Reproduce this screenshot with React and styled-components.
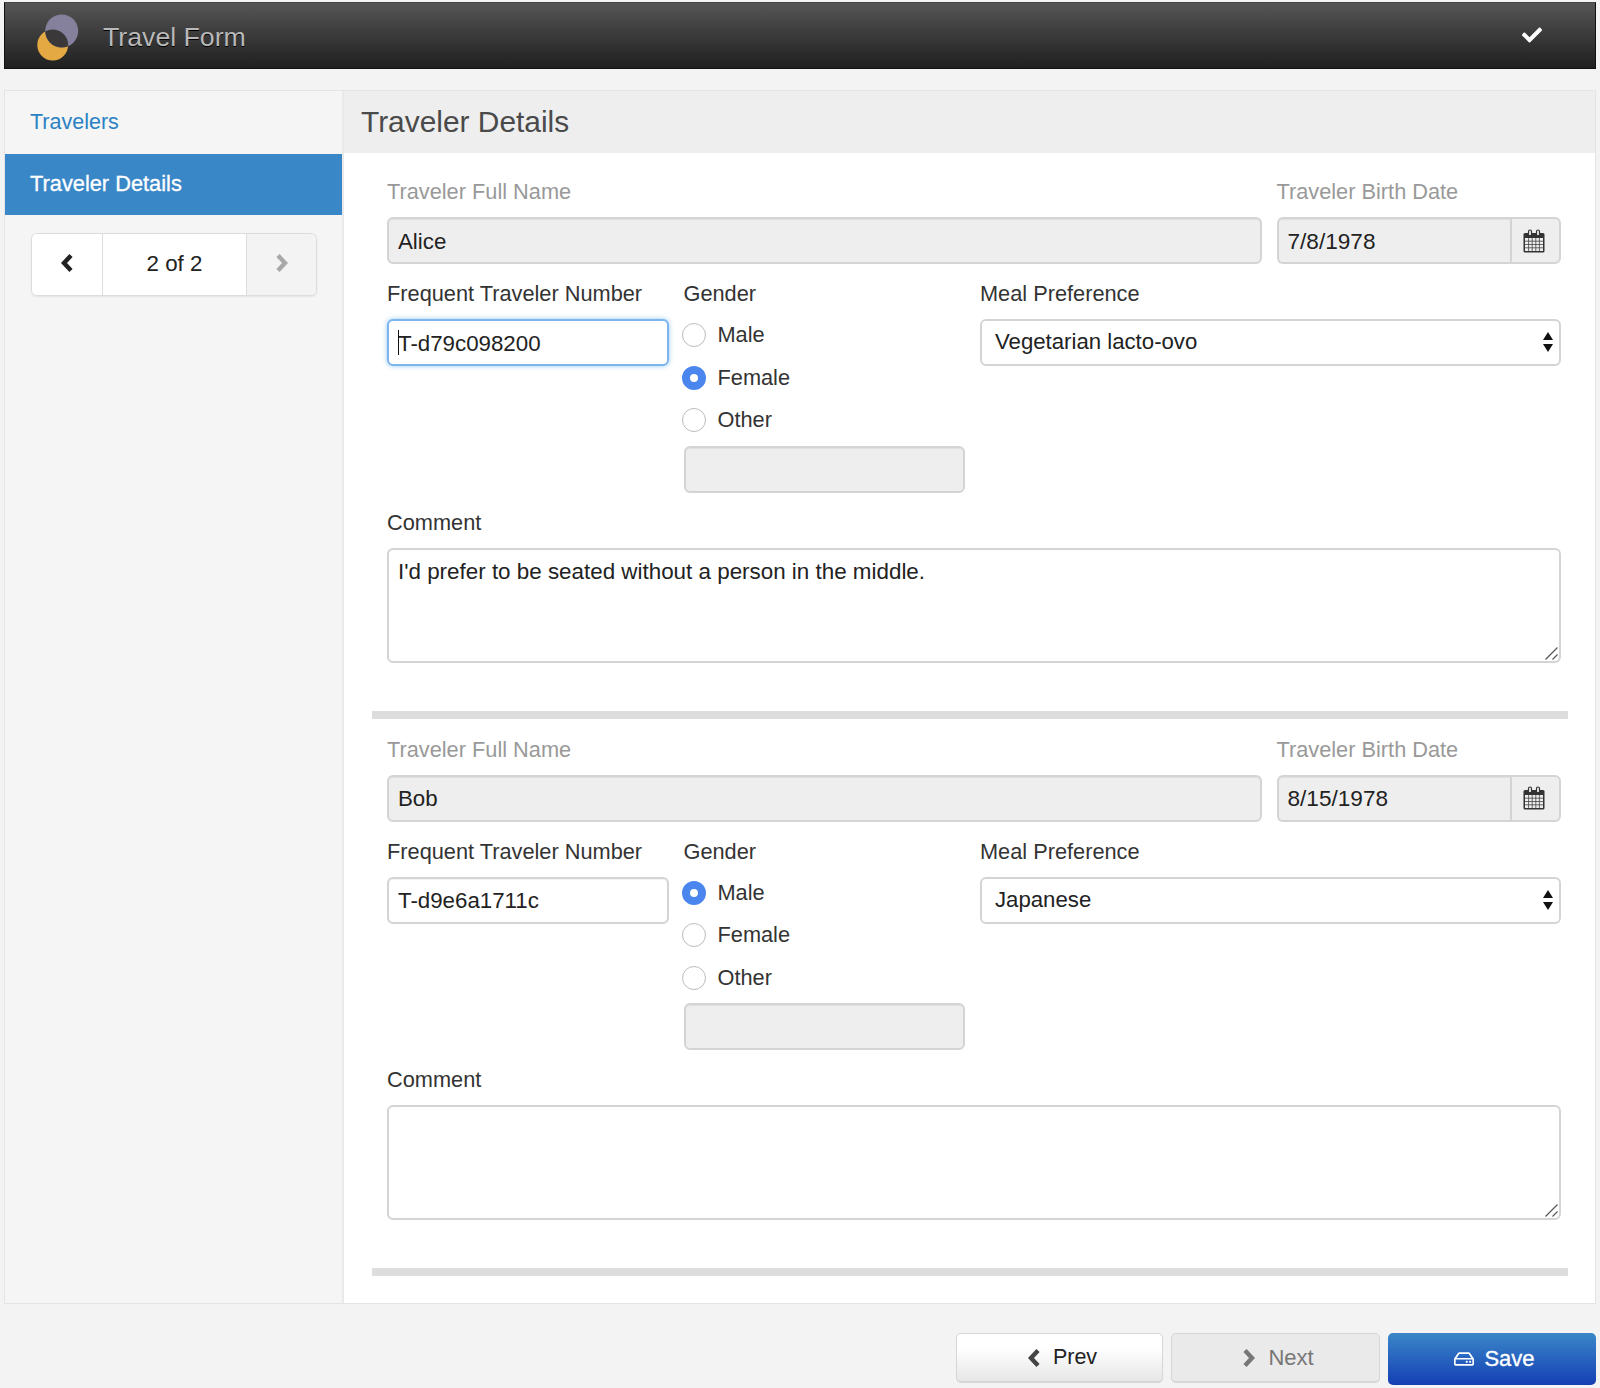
import React from 'react'
import styled, {createGlobalStyle} from "styled-components";
import {FaCheck, FaRegHdd} from "react-icons/fa";

const GlobalStyle = createGlobalStyle`
  body {
    margin: 0;
    background-color: #f3f3f3;
    font-family: "Liberation Sans", Arial, sans-serif;
    color: #222;
  }
`;

const travelers = [
  {name: "Alice", birth: "7/8/1978", number: "T-d79c098200", gender: "Female", meal: "Vegetarian lacto-ovo", comment: "I'd prefer to be seated without a person in the middle.", focused: true},
  {name: "Bob", birth: "8/15/1978", number: "T-d9e6a1711c", gender: "Male", meal: "Japanese", comment: "", focused: false},
];

function Logo() {
  return (
    <LogoSvg viewBox="0 0 42 47" width="42" height="47">
      <defs>
        <clipPath id="logo-lens">
          <circle cx="24.7" cy="17" r="16.5" />
        </clipPath>
      </defs>
      <circle cx="15.7" cy="31" r="15.4" fill="#e4a942" />
      <circle cx="24.7" cy="17" r="16.5" fill="#85819c" />
      <circle cx="15.7" cy="31" r="15.4" fill="#3a3838" clipPath="url(#logo-lens)" />
    </LogoSvg>
  )
}

function CalendarIcon() {
  return (
    <svg viewBox="0 0 22 24" width="22" height="24">
      <rect x="0.5" y="4" width="21" height="19.5" rx="1.5" fill="#333" />
      <rect x="2" y="9" width="18" height="13" fill="#eee" />
      <path d="M2 12.2H20M2 15.5H20M2 18.8H20M5.6 9V22M9.2 9V22M12.8 9V22M16.4 9V22" stroke="#444" strokeWidth="0.8" />
      <path d="M5.5 6V2.5a1.5 1.5 0 0 1 3 0V6M13.5 6V2.5a1.5 1.5 0 0 1 3 0V6" fill="#eee" stroke="#333" strokeWidth="1.2" />
    </svg>
  )
}

// heavy glyphicon style chevron
function Chevron({left, color}) {
  return (
    <svg viewBox="0 0 14 20" width="14" height="20">
      <polyline
        points={left ? "11,2.5 4,10 11,17.5" : "3,2.5 10,10 3,17.5"}
        fill="none"
        stroke={color}
        strokeWidth="4.4"
      />
    </svg>
  )
}

function TravelerForm({traveler}) {
  return (
    <TravelerSection>
      <FieldGrid>
        <Field $span={3} $inset>
          <FieldLabel $muted>Traveler Full Name</FieldLabel>
          <TextInput disabled readOnly value={traveler.name} />
        </Field>
        <Field>
          <FieldLabel $muted>Traveler Birth Date</FieldLabel>
          <DateGroup>
            <DateInput disabled readOnly value={traveler.birth} />
            <DateAddon><CalendarIcon /></DateAddon>
          </DateGroup>
        </Field>
        <Field $inset>
          <FieldLabel>Frequent Traveler Number</FieldLabel>
          <InputWrap>
            <TextInput readOnly value={traveler.number} $focused={traveler.focused} />
            {traveler.focused && <Caret />}
          </InputWrap>
        </Field>
        <Field $inset>
          <FieldLabel>Gender</FieldLabel>
          <RadioList>
            {["Male", "Female", "Other"].map((g) => (
              <RadioRow key={g}>
                <Radio type="radio" readOnly checked={traveler.gender === g} name={traveler.name} />
                {g}
              </RadioRow>
            ))}
          </RadioList>
          <TextInput disabled readOnly value="" />
        </Field>
        <Field $span={2}>
          <FieldLabel>Meal Preference</FieldLabel>
          <InputWrap>
            <MealSelect value={traveler.meal} readOnly>
              <option>{traveler.meal}</option>
            </MealSelect>
            <SelectArrows viewBox="0 0 10 20" width="10" height="20">
              <path d="M5 0 L10 8 H0 Z M0 12 H10 L5 20 Z" fill="#111" />
            </SelectArrows>
          </InputWrap>
        </Field>
        <Field $span={4}>
          <FieldLabel>Comment</FieldLabel>
          <InputWrap>
            <CommentBox readOnly value={traveler.comment} />
            <ResizeGrip viewBox="0 0 13 13" width="13" height="13">
              <path d="M0.5 12.5 L12.5 0.5 M7.5 12.5 L12.5 7.5" stroke="#555" strokeWidth="1.2" fill="none" />
            </ResizeGrip>
          </InputWrap>
        </Field>
      </FieldGrid>
      <Divider />
    </TravelerSection>
  )
}

export default function App() {
  return (
    <>
      <GlobalStyle />
      <Page>
        <TopBar>
          <Brand>
            <Logo />
            <BrandTitle>Travel Form</BrandTitle>
          </Brand>
          <TopCheck><FaCheck size={20} /></TopCheck>
        </TopBar>
        <Panel>
          <Sidebar>
            <SideLink>Travelers</SideLink>
            <SideLink $active>Traveler Details</SideLink>
            <Pager>
              <PagerArrow><Chevron left color="#222" /></PagerArrow>
              <PagerCount>2 of 2</PagerCount>
              <PagerArrow $disabled><Chevron color="#a8a8a8" /></PagerArrow>
            </Pager>
          </Sidebar>
          <Main>
            <MainHeader>Traveler Details</MainHeader>
            <MainBody>
              {travelers.map((t) => <TravelerForm key={t.name} traveler={t} />)}
            </MainBody>
          </Main>
        </Panel>
        <Footer>
          <NavButton><Chevron left color="#444" />Prev</NavButton>
          <NavButton $disabled><Chevron color="#777" />Next</NavButton>
          <SaveButton><FaRegHdd size={20} />Save</SaveButton>
        </Footer>
      </Page>
    </>
  )
}

const Page = styled.div`
  width: 1592px;
  margin: 0 auto;
  padding: 2px 0 4px;
`;

const TopBar = styled.header`
  height: 67px;
  box-sizing: border-box;
  display: flex;
  align-items: center;
  justify-content: space-between;
  background: linear-gradient(to bottom, #555 0%, #1f1f1f 100%);
  border: 1px solid #111;
  border-top-color: #444;
`;

const Brand = styled.div`
  display: flex;
  align-items: center;
  gap: 24px;
  padding-left: 32px;
`;

const LogoSvg = styled.svg`
  display: block;
  margin-top: 3px;
`;

const BrandTitle = styled.span`
  padding-top: 3px;
  font-size: 26.7px;
  color: #b9b9b9;
  text-shadow: 0 1px 0 #000;
`;

const TopCheck = styled.span`
  color: #fff;
  display: flex;
  margin-right: 53px;
  margin-bottom: 1px;
`;

const Panel = styled.div`
  margin-top: 21px;
  display: flex;
  border: 1px solid #e4e4e4;
  background-color: #f5f5f5;
`;

const Sidebar = styled.nav`
  width: 337px;
  flex: none;
  border-right: 2px solid #e9e9e9;
`;

const SideLink = styled.div`
  height: ${(p) => (p.$active ? "61px" : "63px")};
  display: flex;
  align-items: center;
  padding-left: 25px;
  padding-bottom: ${(p) => (p.$active ? "2px" : "0")};
  box-sizing: border-box;
  font-size: ${(p) => (p.$active ? "21.8px" : "21.5px")};
  color: ${(p) => (p.$active ? "#fff" : "#2a82c4")};
  background-color: ${(p) => (p.$active ? "#3a87c8" : "transparent")};
  -webkit-text-stroke: ${(p) => (p.$active ? "0.3px #fff" : "0")};
`;

const Pager = styled.div`
  margin: 18px 25px 0 26px;
  height: 63px;
  box-sizing: border-box;
  display: grid;
  grid-template-columns: 70px 1fr 69px;
  border: 1px solid #ddd;
  border-radius: 6px;
  overflow: hidden;
  box-shadow: 0 1px 2px rgba(0, 0, 0, 0.08);
`;

const PagerArrow = styled.div`
  display: flex;
  align-items: center;
  justify-content: center;
  padding-bottom: 4px;
  background-color: ${(p) => (p.$disabled ? "#f3f3f3" : "#fff")};
`;

const PagerCount = styled.div`
  display: flex;
  align-items: center;
  justify-content: center;
  padding-bottom: 2px;
  background-color: #fff;
  font-size: 22.3px;
  color: #222;
  border-left: 1px solid #ddd;
  border-right: 1px solid #ddd;
`;

const Main = styled.main`
  flex: 1;
  min-width: 0;
  background-color: #fff;
`;

const MainHeader = styled.h2`
  margin: 0;
  height: 62px;
  display: flex;
  align-items: center;
  padding-left: 17px;
  background-color: #eee;
  font-size: 29.9px;
  font-weight: normal;
  color: #4a4a4a;
`;

const MainBody = styled.div`
  padding: 25px 27px 27px 28px;
`;

const TravelerSection = styled.section`
  & + & {
    margin-top: 17px;
  }
`;

const FieldGrid = styled.div`
  display: grid;
  grid-template-columns: repeat(4, 1fr);
  column-gap: 12px;
  row-gap: 16px;
  padding: 0 7px 0 15px;
`;

const Field = styled.div`
  grid-column: span ${(p) => p.$span || 1};
  display: flex;
  flex-direction: column;
  min-width: 0;
  padding-right: ${(p) => (p.$inset ? "3px" : "0")};
`;

const FieldLabel = styled.label`
  height: 28px;
  line-height: 28px;
  margin-bottom: 11px;
  font-size: 21.75px;
  white-space: nowrap;
  color: ${(p) => (p.$muted ? "#999" : "#333")};
`;

const InputWrap = styled.div`
  position: relative;
`;

const TextInput = styled.input`
  width: 100%;
  height: 47px;
  box-sizing: border-box;
  padding: 2px 9px 0;
  font-family: inherit;
  font-size: 22.3px;
  color: #222;
  opacity: 1;
  outline: none;
  border-radius: 6px;
  border: 2px solid ${(p) => (p.$focused ? "#7db4ee" : "#d4d4d4")};
  background-color: #fff;
  box-shadow: ${(p) => (p.$focused ? "0 0 5px rgba(82, 168, 236, 0.6)" : "inset 0 1px 1px rgba(0, 0, 0, 0.06)")};
  &:disabled {
    background-color: #eee;
    color: #222;
    -webkit-text-fill-color: #222;
  }
`;

const Caret = styled.span`
  position: absolute;
  left: 11px;
  top: 11px;
  width: 1px;
  height: 25px;
  background-color: #111;
`;

const DateGroup = styled.div`
  display: flex;
  height: 47px;
`;

const DateInput = styled(TextInput)`
  flex: 1;
  min-width: 0;
  font-size: 22.6px;
  border-radius: 6px 0 0 6px;
  border-right: 0;
`;

const DateAddon = styled.div`
  width: 51px;
  flex: none;
  box-sizing: border-box;
  display: flex;
  align-items: center;
  justify-content: center;
  padding-right: 3px;
  background-color: #eee;
  border: 2px solid #d4d4d4;
  border-radius: 0 6px 6px 0;
`;

const RadioList = styled.div`
  display: flex;
  flex-direction: column;
  margin: -5px 0 4px -2px;
`;

const RadioRow = styled.div`
  height: 42.5px;
  display: flex;
  align-items: center;
  gap: 12px;
  font-size: 21.75px;
  color: #333;
`;

const Radio = styled.input`
  appearance: none;
  margin: 0;
  width: 24px;
  height: 24px;
  box-sizing: border-box;
  border-radius: 50%;
  border: 1px solid #bbb;
  background-color: #fff;
  &:checked {
    border: 8px solid #4b86ee;
  }
`;

const MealSelect = styled.select`
  appearance: none;
  width: 100%;
  height: 47px;
  box-sizing: border-box;
  padding: 0 13px 2px;
  font-family: inherit;
  font-size: 22.2px;
  color: #222;
  background-color: #fff;
  border: 2px solid #d4d4d4;
  border-radius: 6px;
`;

const SelectArrows = styled.svg`
  position: absolute;
  right: 8px;
  top: 13px;
  pointer-events: none;
`;

const CommentBox = styled.textarea`
  display: block;
  width: 100%;
  height: 115px;
  box-sizing: border-box;
  padding: 9px 9px;
  font-family: inherit;
  font-size: 22.4px;
  color: #222;
  outline: none;
  resize: none;
  border: 2px solid #d4d4d4;
  border-radius: 6px;
`;

const ResizeGrip = styled.svg`
  position: absolute;
  right: 3px;
  bottom: 3px;
  pointer-events: none;
`;

const Divider = styled.div`
  height: 8px;
  margin-top: 48px;
  background-color: #ddd;
`;

const Footer = styled.footer`
  display: flex;
  justify-content: flex-end;
  gap: 8px;
  padding-top: 29px;
`;

const NavButton = styled.button`
  width: ${(p) => (p.$disabled ? "209px" : "207px")};
  height: 50px;
  display: flex;
  align-items: center;
  justify-content: center;
  gap: 12px;
  padding: 0 0 0 5px;
  font-family: inherit;
  font-size: ${(p) => (p.$disabled ? "22px" : "21.5px")};
  color: ${(p) => (p.$disabled ? "#777" : "#222")};
  background: ${(p) => (p.$disabled ? "#eaeaea" : "linear-gradient(to bottom, #fff 30%, #e6e6e6 100%)")};
  border: 1px solid #d6d6d6;
  border-bottom-width: 2px;
  border-radius: 5px;
`;

const SaveButton = styled.button`
  width: 208px;
  height: 52px;
  display: flex;
  align-items: center;
  justify-content: center;
  gap: 10px;
  padding: 0 0 0 5px;
  font-family: inherit;
  font-size: 22px;
  -webkit-text-stroke: 0.3px #fff;
  color: #fff;
  background: linear-gradient(to bottom, #3a87c8 0%, #153fb5 100%);
  border: 0;
  border-radius: 5px;
`;
